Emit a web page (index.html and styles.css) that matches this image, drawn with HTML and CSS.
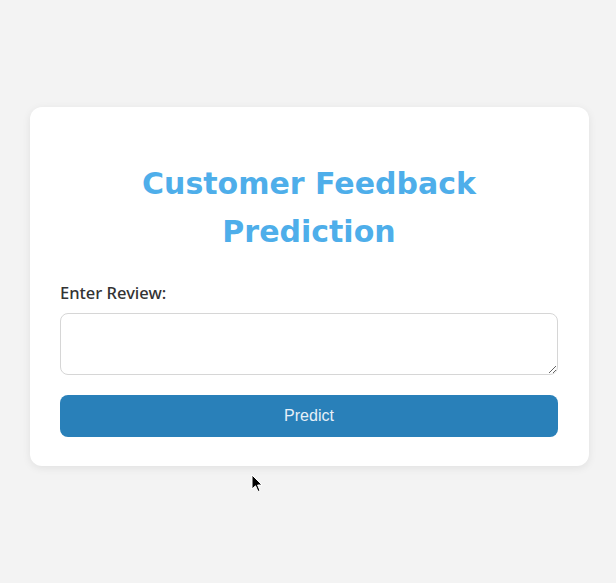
FILE: index.html
```html
<!DOCTYPE html>
<html>
<head>
<meta charset="utf-8">
<link rel="stylesheet" href="styles.css">
</head>
<body>
<main class="page">
  <section class="card">
    <h1 class="title">Customer Feedback<br>Prediction</h1>
    <form class="form">
      <label class="label" for="review">Enter Review:</label>
      <textarea id="review" class="review"></textarea>
      <button type="button" class="btn">Predict</button>
    </form>
  </section>
  <svg class="cursor" width="13" height="20" viewBox="0 0 13 20"><path d="M1 1 L1 15 L4.5 11.8 L7 17.5 L9 16.6 L6.6 11 L11 11 Z" fill="#000" stroke="#fff" stroke-width="1"/></svg>
</main>
</body>
</html>
```
FILE: styles.css
```css
html, body {
  margin: 0;
  padding: 0;
}
body {
  background: #f3f3f3;
  font-family: "Noto Sans", "DejaVu Sans", sans-serif;
  width: 616px;
  height: 583px;
  overflow: hidden;
}
.page {
  position: relative;
  padding: 107px 27px 0 30px;
}
.card {
  background: #fff;
  border-radius: 12px;
  box-shadow: 0 2px 8px rgba(0,0,0,0.08);
  padding: 30px 31px 30px 30px;
  height: 299px;
  display: flex;
  flex-direction: column;
}
.title {
  margin: 23px 0 0 0;
  text-align: center;
  color: #4eaeea;
  font-family: "DejaVu Sans", sans-serif;
  font-weight: 700;
  font-size: 30px;
  line-height: 48px;
}
.form {
  display: flex;
  flex-direction: column;
  margin-top: 26px;
}
.label {
  font-family: "Noto Sans", sans-serif;
  font-weight: 500;
  font-size: 16.5px;
  line-height: 21px;
  color: #333;
}
.review {
  margin-top: 10px;
  height: 62px;
  box-sizing: border-box;
  border: 1px solid #d6d6d6;
  border-radius: 8px;
  padding: 8px;
  font-family: inherit;
  resize: vertical;
}
.btn {
  margin-top: 20px;
  height: 42px;
  border: none;
  border-radius: 8px;
  background: #2980b9;
  color: #e6f0f8;
  font-family: "Liberation Sans", Arial, sans-serif;
  font-size: 16px;
}
.cursor {
  position: absolute;
  left: 251px;
  top: 474px;
}
```
